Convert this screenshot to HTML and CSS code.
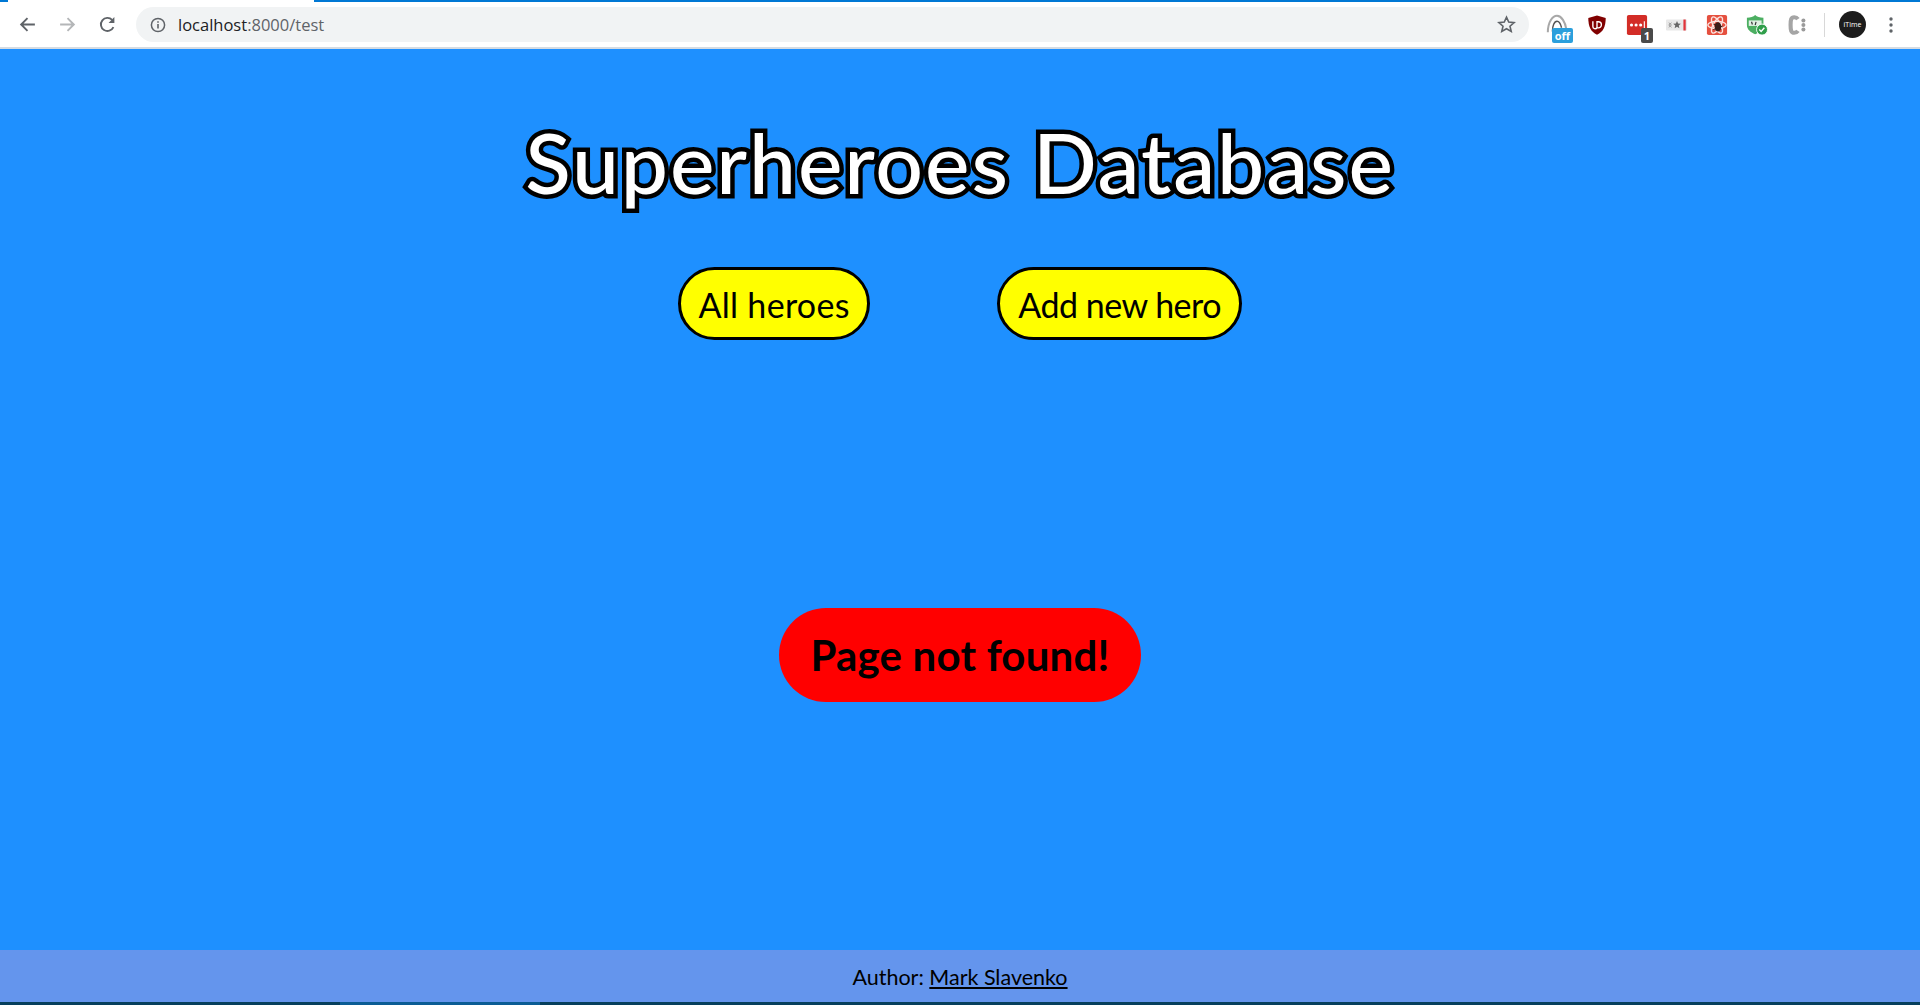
FILE: index.html
```html
<!DOCTYPE html>
<html>
    <head>
        <title>Superheroes Database</title>
        <meta charset="UTF-8">
        <link rel="stylesheet" href="styles.css">
    </head>
    <body>
        <div class="toolbar">
            <div class="progress"><div class="tab-edge"></div><div class="tab-rest"></div></div>
            <div class="toolbar-row">
                <svg class="nav-icon" viewBox="0 0 18 18"><path d="M16 9H3M9 3L3 9l6 6" fill="none" stroke="#5f6368" stroke-width="1.8"/></svg>
                <svg class="nav-icon" viewBox="0 0 18 18"><path d="M2 9h13M9 3l6 6-6 6" fill="none" stroke="#b4b6b8" stroke-width="1.8"/></svg>
                <svg class="nav-icon" viewBox="0 0 18 18"><path d="M14.6 11.5A6.2 6.2 0 1 1 13.4 4.6" fill="none" stroke="#5f6368" stroke-width="1.8"/><path d="M15.5 2v5.5H10z" fill="#5f6368"/></svg>
                <div class="omnibox">
                    <svg class="info-icon" viewBox="0 0 16 16"><circle cx="8" cy="8" r="6.6" fill="none" stroke="#5f6368" stroke-width="1.5"/><path d="M7.2 7h1.6v4.6H7.2zM7.2 4.2h1.6v1.6H7.2z" fill="#5f6368"/></svg>
                    <span class="url"><span class="host">localhost</span>:8000/test</span>
                    <svg class="star-icon" viewBox="0 0 18 18"><path d="M9 2l2.1 4.7 5.1.5-3.9 3.4 1.2 5L9 13l-4.5 2.6 1.2-5-3.9-3.4 5.1-.5z" fill="none" stroke="#5f6368" stroke-width="1.5"/></svg>
                </div>
                <div class="extensions">
                    <div class="ext">
                        <svg viewBox="0 0 24 24"><path d="M2 20C2 9 7 2 12 2s9 7 10 14" fill="none" stroke="#a8a8a8" stroke-width="2.2"/><path d="M7 19c0-6 2-11 5-11s4 3 5 7" fill="none" stroke="#555" stroke-width="1.6"/></svg>
                        <span class="badge badge-blue">off</span>
                    </div>
                    <div class="ext">
                        <svg viewBox="0 0 24 24"><path d="M12 1.500l9.500 2.800c0 9.500-2.700 15-9.500 18.200C5.200 19.300 2.500 13.800 2.500 4.300z" fill="#800000"/><path d="M7.500 8v5.500a2.400 2.400 0 0 0 4.500 1.300M12 8.500h1.500a3.300 3.300 0 0 1 0 6.600H12z" fill="none" stroke="#fff" stroke-width="1.500"/></svg>
                    </div>
                    <div class="ext">
                        <svg viewBox="0 0 24 24"><rect x="1" y="1" width="22" height="22" rx="2" fill="#d32d27"/><circle cx="6" cy="12" r="1.700" fill="#fff"/><circle cx="11" cy="12" r="1.700" fill="#fff"/><circle cx="16" cy="12" r="1.700" fill="#fff"/><path d="M20 8v8" stroke="#fff" stroke-width="1.200"/></svg>
                        <span class="badge badge-grey">1</span>
                    </div>
                    <div class="ext">
                        <svg viewBox="0 0 24 24"><rect x="0" y="6" width="23" height="12" rx="1" fill="#e8e8e8"/><path d="M3 9.500l3 2.500-3 2.500M6 9.500l-3 2.500 3 2.500" fill="none" stroke="#999" stroke-width="1"/><path d="M12 7.500l1.200 2.800 3 .2-2.300 2 .7 3-2.600-1.600-2.600 1.600.7-3-2.300-2 3-.2z" fill="#666"/><rect x="19" y="6" width="2.500" height="12" fill="#e0353b"/></svg>
                    </div>
                    <div class="ext">
                        <svg viewBox="0 0 24 24"><rect x="1" y="1" width="22" height="22" rx="2" fill="#e5503f"/><g fill="none" stroke="#fbe3df" stroke-width="1.500"><ellipse cx="12" cy="12" rx="10" ry="4"/><ellipse cx="12" cy="12" rx="10" ry="4" transform="rotate(60 12 12)"/><ellipse cx="12" cy="12" rx="10" ry="4" transform="rotate(120 12 12)"/></g><ellipse cx="13" cy="14" rx="3.500" ry="5" fill="#3a1c18"/><path d="M8 11l10 3M8 17l10-4" stroke="#3a1c18" stroke-width="1"/></svg>
                    </div>
                    <div class="ext">
                        <svg viewBox="0 0 24 24"><path d="M1 4c4 0 7-1 9-3 2 2 5 3 9 3v8c0 5-4 8-9 10C5 20 1 17 1 12z" fill="#4caf62"/><rect x="3" y="7" width="14" height="6" fill="#dff0e3"/><path d="M6 8.500l1 3M11 8.500l-1 3.500" stroke="#333" stroke-width="1.300"/><circle cx="17.500" cy="17" r="6" fill="#2f9e4a" stroke="#fff"/><path d="M14.500 17l2 2 3.500-4" fill="none" stroke="#fff" stroke-width="1.500"/></svg>
                    </div>
                    <div class="ext">
                        <svg viewBox="0 0 24 24"><path d="M13 5.500C12 4 10.500 3.500 9 3.500 5.500 3.500 5 6 5 12s.5 8.500 4 8.500c1.500 0 3-.5 4-2" fill="none" stroke="#a5a5a5" stroke-width="4.500"/><circle cx="19" cy="7" r="2.200" fill="#9a9a9a"/><circle cx="19" cy="12" r="2.200" fill="#9a9a9a"/><circle cx="19" cy="17" r="2.200" fill="#9a9a9a"/></svg>
                    </div>
                </div>
                <div class="divider"></div>
                <div class="avatar">iTime</div>
                <svg class="menu-icon" viewBox="0 0 4 18"><circle cx="2" cy="3" r="1.700"/><circle cx="2" cy="9" r="1.700"/><circle cx="2" cy="15" r="1.700"/></svg>
            </div>
        </div>
        <div class="page">
            <h1 class="title">Superheroes Database</h1>
            <nav class="menu">
                <a class="menu-btn menu-btn-all" href="#">All heroes</a>
                <a class="menu-btn menu-btn-add" href="#">Add new hero</a>
            </nav>
            <main class="content">
                <div class="not-found">Page not found!</div>
            </main>
            <footer class="footer">Author:&nbsp;<a href="#">Mark Slavenko</a></footer>
        </div>
        <div class="taskbar"><div class="taskbar-active"></div></div>
    </body>
</html>
```

FILE: styles.css
```css
html, body{
    height: 100%;
}
body{
    margin: 0;
    display: flex;
    flex-direction: column;
    overflow: hidden;
    background-color: dodgerblue;
    font-family: "Comic Sans MS", Lato, sans-serif;
}
.toolbar{
    height: 49px;
    flex: none;
    box-sizing: border-box;
    background-color: white;
    border-bottom: 2px solid #d5dbe2;
}
.progress{
    height: 2px;
    background-color: #0078d4;
    display: flex;
}
.tab-edge{
    width: 8px;
}
.tab-rest{
    width: 306px;
    background-color: white;
}
.toolbar-row{
    height: 45px;
    display: flex;
    align-items: center;
    padding-left: 18px;
    font-family: "Open Sans", sans-serif;
}
.nav-icon{
    width: 19px;
    height: 19px;
    margin-right: 21px;
}
.omnibox{
    width: 1393px;
    height: 35px;
    margin-left: -2px;
    flex: none;
    display: flex;
    align-items: center;
    box-sizing: border-box;
    background-color: #f1f3f4;
    border-radius: 18px;
    padding: 0 13px 0 14px;
}
.info-icon{
    width: 16px;
    height: 16px;
    margin-right: 12px;
}
.url{
    font-size: 16.5px;
    color: #5f6368;
    flex: 1;
}
.host{
    color: #202124;
}
.star-icon{
    width: 19px;
    height: 19px;
}
.extensions{
    display: flex;
    align-items: center;
    margin-left: 17px;
    gap: 18px;
}
.ext{
    position: relative;
    width: 22px;
    height: 22px;
}
.ext svg{
    display: block;
    width: 22px;
    height: 22px;
}
.badge{
    position: absolute;
    right: -5px;
    bottom: -7px;
    height: 15px;
    line-height: 15px;
    padding: 0 3px;
    font-size: 11px;
    font-weight: bold;
    color: white;
    border-radius: 2px;
}
.badge-blue{
    background-color: #2b9fdc;
}
.badge-grey{
    background-color: #4a4a4a;
}
.divider{
    width: 1px;
    height: 24px;
    margin: 0 14px 0 16px;
    background-color: #d8d8d8;
}
.avatar{
    width: 27px;
    height: 27px;
    flex: none;
    border-radius: 50%;
    background-color: #1c1c1c;
    color: white;
    font-size: 7px;
    line-height: 27px;
    text-align: center;
}
.menu-icon{
    width: 4px;
    height: 18px;
    margin-left: 23px;
    fill: #5f6368;
}
.page{
    flex: 1;
    display: flex;
    flex-direction: column;
    align-items: center;
    min-height: 0;
}
.title{
    margin: 63px 0 0;
    font-size: 84px;
    line-height: 100px;
    font-weight: 500;
    color: white;
    letter-spacing: 1.9px;
    -webkit-text-stroke: 9px black;
    paint-order: stroke fill;
}
.menu{
    margin-top: 55px;
    display: flex;
    gap: 127px;
}
.menu-btn{
    display: block;
    height: 73px;
    box-sizing: border-box;
    line-height: 70px;
    font-size: 34px;
    color: black;
    text-decoration: none;
    background-color: yellow;
    border: 3px solid black;
    border-radius: 37px;
}
.menu-btn-all{
    padding: 0 17.5px;
    letter-spacing: 0.3px;
}
.menu-btn-add{
    padding: 0 18px;
    letter-spacing: -0.5px;
}
.content{
    flex: 1;
    display: flex;
    align-items: flex-start;
    padding-top: 268px;
}
.not-found{
    width: 362px;
    height: 94px;
    line-height: 95px;
    text-align: center;
    font-size: 42px;
    font-weight: bold;
    letter-spacing: 0.2px;
    background-color: red;
    border-radius: 47px;
}
.footer{
    width: 100%;
    height: 52px;
    flex: none;
    box-sizing: border-box;
    padding-top: 2px;
    display: flex;
    align-items: center;
    justify-content: center;
    font-size: 21.5px;
    background-color: cornflowerblue;
}
.footer a{
    color: black;
}
.taskbar{
    height: 3px;
    flex: none;
    background-color: #063f5c;
}
.taskbar-active{
    width: 200px;
    height: 3px;
    margin-left: 340px;
    background-color: #0b5c94;
}
```
